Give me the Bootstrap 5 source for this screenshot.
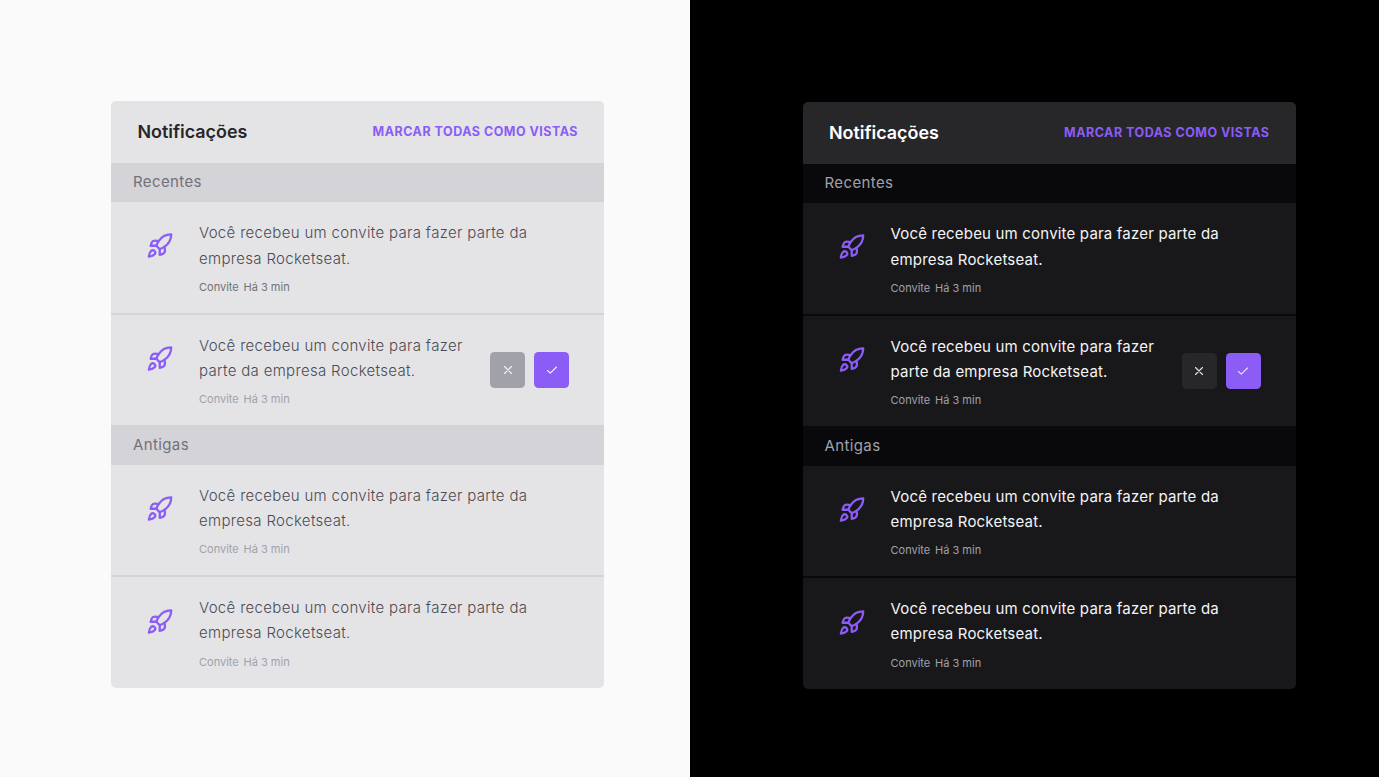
<!DOCTYPE html>
<html lang="pt-BR">
<head>
<meta charset="utf-8">
<meta name="viewport" content="width=device-width, initial-scale=1">
<title>Notificações</title>
<link href="https://cdn.jsdelivr.net/npm/bootstrap@5.3.0/dist/css/bootstrap.min.css" rel="stylesheet">
<style>
  body { font-family: Inter, "Liberation Sans", sans-serif; }
  .pane { --page: #fafafa; --head: #e4e4e6; --band: #d4d4d8; --item: #e4e4e6; --title: #27272a;
    --label: #71717a; --msg: #4b4b54; --msg-weight: 300; --msg-spacing: .32px; --meta: #a1a1aa; --dismiss: #a1a1aa; --glyph: #f4f4f5;
    background: var(--page); padding: 101px 0 0 111px; flex: 0 0 690px; }
  .pane-dark { --page: #000; --head: #27272a; --band: #09090b; --item: #18181b; --title: #fff;
    --label: #a1a1aa; --msg: #f4f4f5; --msg-weight: 400; --msg-spacing: .19px; --dismiss: #27272a; --glyph: #e4e4e7;
    flex: 1 1 0; padding: 102px 0 0 112.5px; }
  .panel { width: 493px; border-radius: 5px; }
  .panel-head { height: 62px; background: var(--head); padding: 0 26px 0 26.5px; }
  .panel-title { font-size: 17.9px; font-weight: 600; color: var(--title); }
  .mark-all { font-size: 12.5px; font-weight: 700; letter-spacing: .49px; color: #8b5cf6; }
  .band { height: 39.4px; background: var(--band); color: var(--label); font-size: 15px; letter-spacing: .38px; padding: 0 22px .7px; }
  .notice + .band { padding-bottom: 0; padding-top: .6px; }
  .notice { height: 110.4px; background: var(--item); padding: 18.1px 35px 0; }
  .notice + .notice { border-top: 2px solid var(--band); height: 112.6px; padding-top: 17.9px; }
  .rocket { width: 27.5px; height: 27.5px; margin-top: 12px; color: #8b5cf6; }
  .notice + .notice .rocket { margin-top: 12.6px; }
  .copy { margin-left: 25.5px; }
  .msg { font-size: 15px; line-height: 25.2px; letter-spacing: var(--msg-spacing); color: var(--msg); font-weight: var(--msg-weight); }
  .meta { font-size: 11px; line-height: 17.6px; margin-top: 8.2px; color: var(--meta); gap: 4.8px; }
  .notice + .notice .meta { margin-top: 8.4px; }
  .meta-new { color: #71717a; }
  .act { width: 35px; height: 36px; border-radius: 4.4px; color: var(--glyph); }
  .act-no { background: var(--dismiss); }
  .act-yes { background: #8b5cf6; }
  .actions { gap: 9px; margin-top: 19.5px; }
</style>
</head>
<body class="m-0 overflow-hidden">
<svg class="d-none">
  <symbol id="rocket" viewBox="0 0 24 24"><g fill="none" stroke="currentColor" stroke-width="2" stroke-linecap="round" stroke-linejoin="round">
    <path d="M4.5 16.5c-1.5 1.26-2 5-2 5s3.74-.5 5-2c.71-.84.7-2.13-.09-2.91a2.18 2.18 0 0 0-2.91-.09z"/>
    <path d="m12 15-3-3a22 22 0 0 1 2-3.95A12.88 12.88 0 0 1 22 2c0 2.72-.78 7.5-6 11a22.35 22.35 0 0 1-4 2z"/>
    <path d="M9 12H4s.55-3.03 2-4c1.62-1.08 5 0 5 0"/><path d="M12 15v5s3.03-.55 4-2c1.08-1.62 0-5 0-5"/></g></symbol>
  <symbol id="cross" viewBox="0 0 14 14"><path d="M3.5 3.5l7 7M10.5 3.5l-7 7" fill="none" stroke="currentColor" stroke-width="1.1" stroke-linecap="round"/></symbol>
  <symbol id="check" viewBox="0 0 14 14"><path d="M2.5 7.5l2.8 2.7L11.5 4" fill="none" stroke="currentColor" stroke-width="1.1" stroke-linecap="round" stroke-linejoin="round"/></symbol>
</svg>
<main class="d-flex vh-100">
  <section class="pane">
    <div class="panel overflow-hidden">
      <header class="panel-head d-flex align-items-center justify-content-between"><h1 class="panel-title m-0">Notificações</h1><a class="mark-all text-decoration-none text-uppercase" href="#">Marcar todas como vistas</a></header>
      <div class="band d-flex align-items-center">Recentes</div>
      <article class="notice d-flex"><svg class="rocket flex-shrink-0"><use href="#rocket"/></svg><div class="copy"><p class="msg m-0">Você recebeu um convite para fazer parte da<br>empresa Rocketseat.</p><div class="meta meta-new d-flex"><span>Convite</span><span>Há 3 min</span></div></div></article>
      <article class="notice d-flex"><svg class="rocket flex-shrink-0"><use href="#rocket"/></svg><div class="copy"><p class="msg m-0">Você recebeu um convite para fazer<br>parte da empresa Rocketseat.</p><div class="meta d-flex"><span>Convite</span><span>Há 3 min</span></div></div>
        <div class="actions d-flex ms-auto"><button class="act act-no btn border-0 p-0 d-flex align-items-center justify-content-center" aria-label="Recusar"><svg width="14" height="14"><use href="#cross"/></svg></button><button class="act act-yes btn border-0 p-0 d-flex align-items-center justify-content-center" aria-label="Aceitar"><svg width="14" height="14"><use href="#check"/></svg></button></div></article>
      <div class="band d-flex align-items-center">Antigas</div>
      <article class="notice d-flex"><svg class="rocket flex-shrink-0"><use href="#rocket"/></svg><div class="copy"><p class="msg m-0">Você recebeu um convite para fazer parte da<br>empresa Rocketseat.</p><div class="meta d-flex"><span>Convite</span><span>Há 3 min</span></div></div></article>
      <article class="notice d-flex"><svg class="rocket flex-shrink-0"><use href="#rocket"/></svg><div class="copy"><p class="msg m-0">Você recebeu um convite para fazer parte da<br>empresa Rocketseat.</p><div class="meta d-flex"><span>Convite</span><span>Há 3 min</span></div></div></article>
    </div>
  </section>
  <section class="pane pane-dark">
    <div class="panel overflow-hidden">
      <header class="panel-head d-flex align-items-center justify-content-between"><h1 class="panel-title m-0">Notificações</h1><a class="mark-all text-decoration-none text-uppercase" href="#">Marcar todas como vistas</a></header>
      <div class="band d-flex align-items-center">Recentes</div>
      <article class="notice d-flex"><svg class="rocket flex-shrink-0"><use href="#rocket"/></svg><div class="copy"><p class="msg m-0">Você recebeu um convite para fazer parte da<br>empresa Rocketseat.</p><div class="meta d-flex"><span>Convite</span><span>Há 3 min</span></div></div></article>
      <article class="notice d-flex"><svg class="rocket flex-shrink-0"><use href="#rocket"/></svg><div class="copy"><p class="msg m-0">Você recebeu um convite para fazer<br>parte da empresa Rocketseat.</p><div class="meta d-flex"><span>Convite</span><span>Há 3 min</span></div></div>
        <div class="actions d-flex ms-auto"><button class="act act-no btn border-0 p-0 d-flex align-items-center justify-content-center" aria-label="Recusar"><svg width="14" height="14"><use href="#cross"/></svg></button><button class="act act-yes btn border-0 p-0 d-flex align-items-center justify-content-center" aria-label="Aceitar"><svg width="14" height="14"><use href="#check"/></svg></button></div></article>
      <div class="band d-flex align-items-center">Antigas</div>
      <article class="notice d-flex"><svg class="rocket flex-shrink-0"><use href="#rocket"/></svg><div class="copy"><p class="msg m-0">Você recebeu um convite para fazer parte da<br>empresa Rocketseat.</p><div class="meta d-flex"><span>Convite</span><span>Há 3 min</span></div></div></article>
      <article class="notice d-flex"><svg class="rocket flex-shrink-0"><use href="#rocket"/></svg><div class="copy"><p class="msg m-0">Você recebeu um convite para fazer parte da<br>empresa Rocketseat.</p><div class="meta d-flex"><span>Convite</span><span>Há 3 min</span></div></div></article>
    </div>
  </section>
</main>
<script src="https://cdn.jsdelivr.net/npm/bootstrap@5.3.0/dist/js/bootstrap.bundle.min.js"></script>
</body>
</html>
